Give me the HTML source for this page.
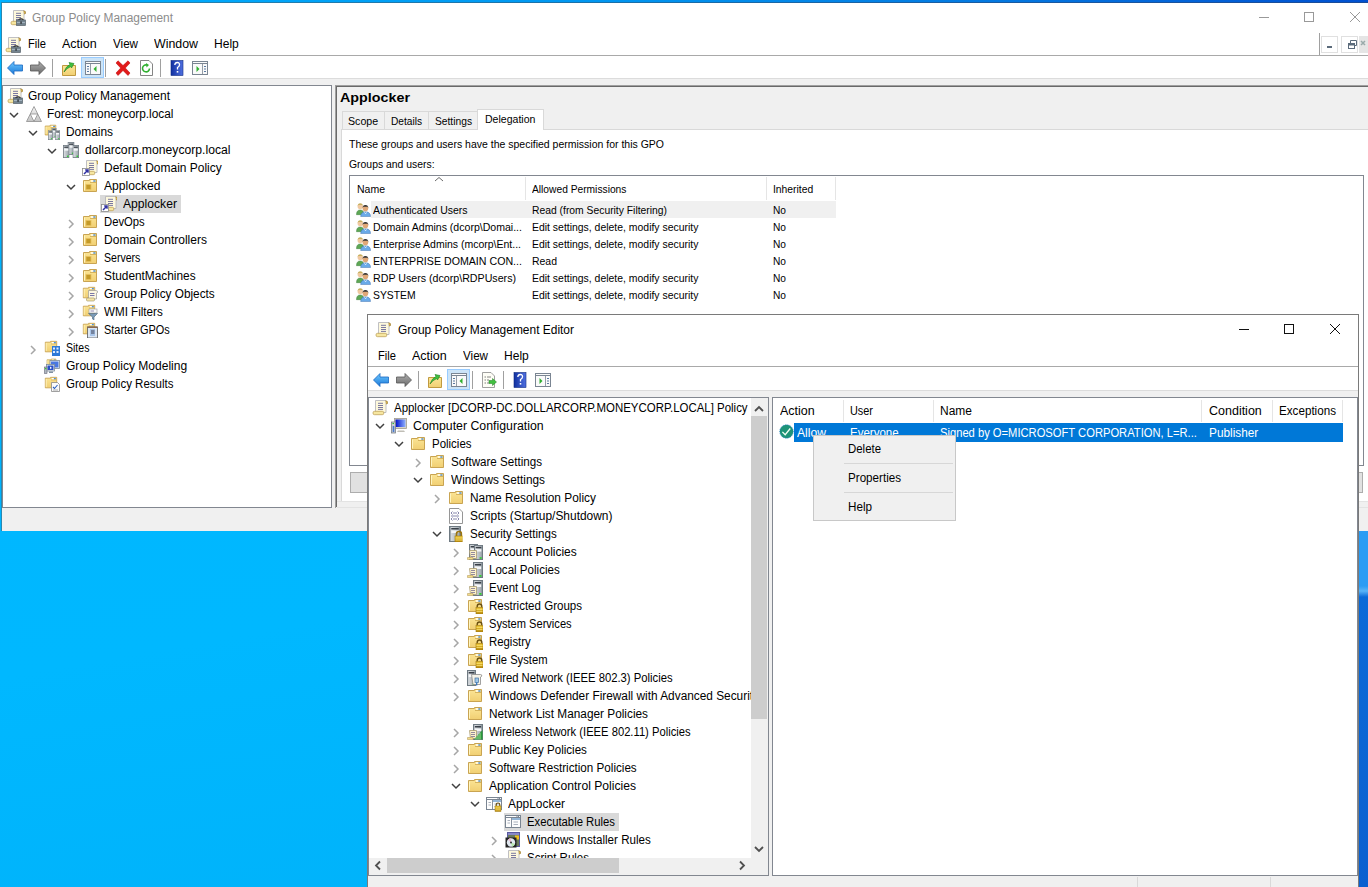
<!DOCTYPE html>
<html><head><meta charset="utf-8"><style>
html,body{margin:0;padding:0;width:1368px;height:887px;overflow:hidden;background:#00b8ff;font-family:"Liberation Sans", sans-serif;}
.a{position:absolute;}
.t{position:absolute;line-height:0;white-space:nowrap;transform-origin:0 0;}
svg.i{position:absolute;overflow:visible;}
</style></head><body>
<svg width="0" height="0" style="position:absolute"><defs>
<linearGradient id="gFold" x1="0" y1="0" x2="0" y2="1"><stop offset="0" stop-color="#fbe596"/><stop offset="1" stop-color="#f1cf72"/></linearGradient>
<linearGradient id="gGray" x1="0" y1="0" x2="1" y2="0"><stop offset="0" stop-color="#dfe3e6"/><stop offset="1" stop-color="#9aa3aa"/></linearGradient>
<linearGradient id="gLock" x1="0" y1="0" x2="0" y2="1"><stop offset="0" stop-color="#f2cc3a"/><stop offset="1" stop-color="#b88a10"/></linearGradient>
<linearGradient id="gTri" x1="0" y1="0" x2="0" y2="1"><stop offset="0" stop-color="#f4f4f4"/><stop offset="1" stop-color="#c4c4c4"/></linearGradient>
<linearGradient id="gScreen" x1="0" y1="0" x2="1" y2="0"><stop offset="0" stop-color="#0010c8"/><stop offset="1" stop-color="#8fb0ff"/></linearGradient>
<linearGradient id="gBack" x1="0" y1="0" x2="0" y2="1"><stop offset="0" stop-color="#6ec8ff"/><stop offset="1" stop-color="#1a78d8"/></linearGradient>
<linearGradient id="gFwd" x1="0" y1="0" x2="0" y2="1"><stop offset="0" stop-color="#b0b0b0"/><stop offset="1" stop-color="#6a6a6a"/></linearGradient>
<linearGradient id="gHelp" x1="0" y1="0" x2="1" y2="0"><stop offset="0" stop-color="#1030a0"/><stop offset="1" stop-color="#5070e0"/></linearGradient>

<symbol id="fold" viewBox="0 0 16 16">
 <path d="M1.5 2.5 H7.5 V1.5 H14.5 V13.5 H1.5 Z" fill="url(#gFold)" stroke="#c9a452"/>
 <path d="M8 4.5 H14" stroke="#d6b35c"/>
 <rect x="9" y="2.3" width="2.5" height="1.4" fill="#fff"/><rect x="11.3" y="2.3" width="2.2" height="1.4" fill="#4a8fe0"/>
 <path d="M2.5 3.5 V12.5" stroke="#fff5c0" stroke-width="1"/>
</symbol>
<symbol id="lock" viewBox="0 0 16 16">
 <path d="M10 10 V8 A2.5 2.5 0 0 1 15 8 V10" fill="none" stroke="#9a7410" stroke-width="1.6"/>
 <rect x="8.5" y="10" width="8" height="6" fill="url(#gLock)" stroke="#a07a10" stroke-width="0.6"/>
 <path d="M9 12 H16 M9 14 H16" stroke="#f8e070" stroke-width="0.8"/>
</symbol>
<symbol id="foldlock" viewBox="0 0 16 16">
 <use href="#fold" width="16" height="16"/>
 <path d="M10.2 9.5 V8.3 A2.3 2.3 0 0 1 14.8 8.3 V9.5" fill="none" stroke="#6a5010" stroke-width="1.4"/>
 <rect x="9" y="9.5" width="7" height="6.5" fill="url(#gLock)" stroke="#a07a10" stroke-width="0.6"/>
 <path d="M9.5 11.5 H15.5 M9.5 13.5 H15.5" stroke="#f8e070" stroke-width="0.8"/>
</symbol>
<symbol id="server" viewBox="0 0 8 16" preserveAspectRatio="none">
 <rect x="0.5" y="0.5" width="7" height="15" fill="url(#gGray)" stroke="#6f7a82"/>
 <rect x="1.5" y="2" width="5" height="1.5" fill="#3a4048"/>
 <rect x="1.5" y="4.5" width="5" height="2.5" fill="#f4f6f8"/>
 <rect x="5" y="13" width="1.8" height="1.8" fill="#30d030"/>
</symbol>
<symbol id="scroll" viewBox="0 0 16 16">
 <path d="M3.5 0.5 H14 V12.5 H3.5Z" fill="#fdf8dc" stroke="#b0b0b8" stroke-width="0.8"/>
 <path d="M13.5 0.8 Q16.2 0.8 15.5 3.5 L14 4" fill="#d4b050" stroke="#a08030" stroke-width="0.7"/>
 <path d="M6 3.3 H11 M6 5.5 H11 M6 7.5 H11 M6 9.4 H11" stroke="#7a78a0" stroke-width="1"/>
 <rect x="1" y="11.3" width="10.8" height="3.4" rx="1.5" fill="#f6e6a0" stroke="#b89a50" stroke-width="0.7"/>
</symbol>
<symbol id="gpm" viewBox="0 0 16 16">
 <use href="#scroll" width="16" height="16"/>
 <path d="M8.5 10 Q11 7.8 13.5 10" fill="none" stroke="#222" stroke-width="1.1"/>
 <rect x="6.5" y="10" width="9" height="5.5" fill="#74848f" stroke="#56616a" stroke-width="0.7"/>
 <rect x="7" y="12" width="8" height="0.9" fill="#a8b8c4"/>
 <rect x="10.5" y="11.5" width="1.1" height="2.2" fill="#111"/>
</symbol>
<symbol id="gpolink" viewBox="0 0 16 16">
 <use href="#scroll" width="16" height="16" x="1"/>
 <rect x="0.5" y="8.5" width="7" height="7" fill="#fff" stroke="#8a8a8a" stroke-width="0.8"/>
 <path d="M2 14 L6 10 M3.2 10 H6 V12.8" fill="none" stroke="#3030a0" stroke-width="1.5"/>
</symbol>
<symbol id="forest" viewBox="0 0 16 16">
 <path d="M8 0.5 L15.5 15.5 H0.5 Z" fill="url(#gTri)" stroke="#8e8e8e" stroke-width="0.8"/>
 <path d="M4.25 8 H11.75 L8 15.5 Z" fill="#fff" stroke="#8e8e8e" stroke-width="0.8"/>
</symbol>
<symbol id="domain" viewBox="0 0 16 16">
 <use href="#server" x="4.5" y="0" width="7" height="13"/>
 <use href="#server" x="0" y="3" width="6.5" height="13"/>
 <use href="#server" x="9.5" y="3" width="6.5" height="13"/>
</symbol>
<symbol id="domains" viewBox="0 0 16 16">
 <use href="#fold" width="13" height="13"/>
 <use href="#domain" x="4" y="4" width="12" height="12"/>
</symbol>
<symbol id="ou" viewBox="0 0 16 16">
 <use href="#fold" width="16" height="16"/>
 <rect x="4" y="6.5" width="5" height="5" fill="#c49a28" stroke="#e6c060" stroke-width="0.8"/>
</symbol>
<symbol id="gpofold" viewBox="0 0 16 16">
 <use href="#fold" width="14" height="14"/>
 <path d="M6.5 4.5 H14 Q16 4.5 15.5 6.5 L14.5 7 V13 H6.5Z" fill="#fdf7e0" stroke="#9a9a9a" stroke-width="0.7"/>
 <path d="M8 7.5 H12.5 M8 9.5 H12.5" stroke="#7a78a8" stroke-width="1"/>
 <rect x="4.5" y="12" width="8" height="3" rx="1" fill="#f4e4a8" stroke="#a09060" stroke-width="0.6"/>
</symbol>
<symbol id="wmi" viewBox="0 0 16 16">
 <use href="#fold" width="14" height="14"/>
 <rect x="7" y="5" width="8" height="4" fill="#fafafa" stroke="#999" stroke-width="0.6"/>
 <path d="M8.5 7 H12" stroke="#8a80b0" stroke-width="0.9"/>
 <path d="M6.5 9.5 H15.5 L12 13 V16 L10.5 15 V13 Z" fill="#7a9ab8" stroke="#4a6680" stroke-width="0.6"/>
</symbol>
<symbol id="starter" viewBox="0 0 16 16">
 <use href="#fold" width="14" height="14"/>
 <rect x="5.5" y="5" width="10" height="11" fill="#dbe6f4" stroke="#5a5a5a" stroke-width="0.8"/>
 <rect x="5.5" y="4.5" width="10" height="1.5" fill="#8a6a50"/>
 <rect x="8" y="7" width="5" height="7" fill="#a8c4e8"/>
 <path d="M9 9 H12.5 M9 11 H12.5" stroke="#334" stroke-width="0.9"/>
</symbol>
<symbol id="sites" viewBox="0 0 16 16">
 <use href="#fold" width="14" height="14"/>
 <rect x="8" y="6" width="8" height="10" fill="#2e7ad8"/>
 <path d="M9 7.5 H11 V9.5 H9Z M12.5 7.5 H14.5 V9.5 H12.5Z M9 11 H11 V13 H9Z M12.5 11 H14.5 V13 H12.5Z" fill="#dbe9ff"/>
</symbol>
<symbol id="modeling" viewBox="0 0 16 16">
 <use href="#fold" width="11" height="11" x="2"/>
 <rect x="6" y="2.5" width="9.5" height="8" fill="#eef2f6" stroke="#7a8a9a" stroke-width="0.8"/>
 <rect x="7" y="3.5" width="7.5" height="6" fill="#4a78e0"/>
 <rect x="2.5" y="6.5" width="8" height="6.5" fill="#eef2f6" stroke="#7a8a9a" stroke-width="0.8"/>
 <rect x="3.5" y="7.5" width="6" height="4.5" fill="#2a50c8"/><path d="M6 8.5 L6 11 L8 10Z" fill="#fff"/>
 <rect x="0.5" y="9" width="2.5" height="6.5" fill="#b0b8c0" stroke="#667" stroke-width="0.6"/>
 <rect x="1" y="10" width="1.4" height="1.2" fill="#30d030"/>
 <rect x="5" y="13.5" width="4" height="1.5" fill="#8090a0"/>
</symbol>
<symbol id="results" viewBox="0 0 16 16">
 <use href="#fold" width="14" height="14"/>
 <path d="M7.5 6.5 H13.5 L15.5 8.5 V15.5 H7.5Z" fill="#fafafa" stroke="#888" stroke-width="0.8"/>
 <path d="M9 11 L10.5 12.5 L13.5 9" fill="none" stroke="#2a60c0" stroke-width="1.1"/>
 <path d="M9 14 H14" stroke="#999" stroke-width="0.8"/>
</symbol>
<symbol id="escroll" viewBox="0 0 16 16"><use href="#scroll" width="16" height="16"/></symbol>
<symbol id="comp" viewBox="0 0 16 16">
 <rect x="3.5" y="0.5" width="12" height="10" fill="#d8d4c8" stroke="#a09c90" stroke-width="0.8"/>
 <rect x="4.5" y="1.5" width="10" height="7.5" fill="url(#gScreen)"/>
 <path d="M7 12.5 H13 L14 14 H6Z" fill="#c0beb6"/>
 <rect x="0.5" y="4" width="4" height="11" fill="#c8cdd2" stroke="#7a8088" stroke-width="0.8"/>
 <rect x="1.7" y="8" width="1.6" height="6" fill="#4a7ad0"/>
 <rect x="1.5" y="5" width="1.5" height="1" fill="#30c030"/>
</symbol>
<symbol id="scripts" viewBox="0 0 16 16">
 <path d="M1.5 0.5 H11 L14.5 4 V15.5 H1.5Z" fill="#fff" stroke="#8a8a8a" stroke-width="0.9"/>
 <path d="M4.5 3.5 L3 5 L4.5 6.5 M9.5 3.5 L11 5 L9.5 6.5 M5 5 H9 M4.5 9.5 L3 11 L4.5 12.5 M9.5 9.5 L11 11 L9.5 12.5 M5 11 H9 M3 8 H11" fill="none" stroke="#6a6a9a" stroke-width="0.8"/>
</symbol>
<symbol id="secset" viewBox="0 0 16 16">
 <use href="#server" x="1" y="0" width="12" height="16"/>
 <use href="#lock" x="-1.5" y="0" width="16" height="16"/>
</symbol>
<symbol id="srvscroll" viewBox="0 0 16 16">
 <use href="#server" x="6" y="0" width="10" height="16"/>
 <path d="M2.5 6.5 H9.5 V14.5 H3.5 Z" fill="#fdf2cc" stroke="#a89a70" stroke-width="0.8"/>
 <path d="M4 8.5 H8 M4 10.5 H8 M4 12.5 H8" stroke="#7a7090" stroke-width="0.8"/>
 <path d="M0.5 13.5 H6 V15.5 H0.5Z" fill="#f2dc8c" stroke="#b8a060" stroke-width="0.6"/>
</symbol>
<symbol id="acctpol" viewBox="0 0 16 16">
 <use href="#server" x="2" y="0" width="9" height="16"/>
 <use href="#server" x="7" y="1" width="9" height="15"/>
 <path d="M2.5 6.5 H9.5 V14.5 H3.5 Z" fill="#fdf2cc" stroke="#a89a70" stroke-width="0.8"/>
 <path d="M4 8.5 H8 M4 10.5 H8 M4 12.5 H8" stroke="#7a7090" stroke-width="0.8"/>
 <path d="M0.5 13.5 H6 V15.5 H0.5Z" fill="#f2dc8c" stroke="#b8a060" stroke-width="0.6"/>
</symbol>
<symbol id="wired" viewBox="0 0 16 16">
 <use href="#server" x="0" y="0" width="9" height="16"/>
 <path d="M4.5 4.5 H13.5 Q15.5 4.5 14.5 6.5 L13.5 7 V14.5 H6 Z" fill="#f6f3e8" stroke="#8a8a8a" stroke-width="0.8"/>
 <rect x="8" y="8" width="3.5" height="4.5" fill="#a0c8e8" stroke="#4070a0" stroke-width="0.7"/>
 <path d="M9.7 12.5 V15.5" stroke="#2a70c0" stroke-width="1.2"/>
</symbol>
<symbol id="wireless" viewBox="0 0 16 16">
 <use href="#srvscroll" width="16" height="16"/>
 <path d="M7 15.5 L15.5 6 V15.5 Z" fill="#2a9a3a"/>
 <path d="M9 15.5 V13 M11 15.5 V11 M13 15.5 V9" stroke="#bfe8b0" stroke-width="0.8"/>
</symbol>
<symbol id="win" viewBox="0 0 16 16">
 <rect x="0.5" y="1.5" width="15" height="12" fill="#fdfdfd" stroke="#7a8592"/>
 <path d="M1 3.5 H15" stroke="#7a8592"/>
 <rect x="11.5" y="2" width="1" height="1" fill="#7a8592"/><rect x="13" y="2" width="1" height="1" fill="#7a8592"/>
 <path d="M6.5 4 V13" stroke="#7a8592" stroke-width="0.9"/>
 <path d="M7 5 H15" stroke="#2a6fb0" stroke-width="1"/>
 <path d="M2.5 6.5 H5 M2.5 9 H5 M8.5 8 H13 M8.5 10.5 H13" stroke="#a0a8b4" stroke-width="0.9"/>
</symbol>
<symbol id="applocker" viewBox="0 0 16 16">
 <use href="#win" width="16" height="16"/>
 <path d="M10.2 10 V8.8 A1.8 1.8 0 0 1 13.8 8.8 V10" fill="none" stroke="#6a5010" stroke-width="1.2"/>
 <rect x="9" y="10" width="6" height="5.5" fill="url(#gLock)" stroke="#a07a10" stroke-width="0.5"/>
 <path d="M9.5 12 H14.5 M9.5 13.8 H14.5" stroke="#f8e070" stroke-width="0.7"/>
</symbol>
<symbol id="installer" viewBox="0 0 16 16">
 <rect x="2.5" y="0.5" width="12" height="14" fill="#6a7a5a" stroke="#5a5aa0"/>
 <rect x="3" y="1" width="11" height="2" fill="#8888c8"/>
 <rect x="10" y="3.5" width="4" height="4" fill="#f0c020"/>
 <rect x="0.5" y="5.5" width="11" height="10" fill="#222"/>
 <circle cx="6" cy="10.5" r="4.2" fill="#e0e8f0"/>
 <path d="M6 10.5 L3 7.5 A4.2 4.2 0 0 1 6 6.3Z" fill="#f0b8d0"/>
 <path d="M6 10.5 L10 12 A4.2 4.2 0 0 1 7 14.6Z" fill="#b8e8b0"/>
 <circle cx="6" cy="10.5" r="1" fill="#333"/>
</symbol>
<symbol id="users" viewBox="0 0 16 16">
 <path d="M0.5 13.5 Q0.5 8.5 4.5 8.5 Q8.5 8.5 8.5 13.5Z" fill="#5ea855" stroke="#3a7a3a" stroke-width="0.5"/>
 <circle cx="4.5" cy="4.8" r="2.8" fill="#f0c8a0"/>
 <path d="M1.7 4.5 Q1.8 1.3 4.5 1.3 Q7.3 1.3 7.3 4.3 L6.5 3.2 H2.6Z" fill="#c8b060"/>
 <path d="M5 15.5 Q5 10.5 10.2 10.5 Q15.5 10.5 15.5 15.5Z" fill="#6aaae8" stroke="#3a70b0" stroke-width="0.5"/>
 <circle cx="10" cy="6.8" r="3" fill="#e0a878"/>
 <path d="M7 6.5 Q7 3.3 10 3.3 Q13 3.3 13.2 6.8 L12.5 5 H7.8Z" fill="#333"/>
 <path d="M9 11 L10.2 12.5 L11.4 11" fill="none" stroke="#fff" stroke-width="0.8"/>
</symbol>
<symbol id="allow" viewBox="0 0 16 16">
 <circle cx="8" cy="8" r="7.2" fill="#1e9478"/>
 <circle cx="8" cy="8" r="7.2" fill="none" stroke="#1a78c8" stroke-width="0.8" stroke-dasharray="1 1"/>
 <path d="M3.6 8.4 L6.6 11.4 L12 4.8" fill="none" stroke="#f4fff4" stroke-width="1.4"/>
</symbol>
<symbol id="chevD" viewBox="0 0 16 16">
 <path d="M4 6 L8 10 L12 6" fill="none" stroke="#404040" stroke-width="1.5"/>
</symbol>
<symbol id="chevR" viewBox="0 0 16 16">
 <path d="M6 4 L10 8 L6 12" fill="none" stroke="#a6a6a6" stroke-width="1.5"/>
</symbol>
<!-- toolbar -->
<symbol id="tbBack" viewBox="0 0 16 16">
 <path d="M0.5 8 L7 1.5 V5 H15.5 V11 H7 V14.5Z" fill="url(#gBack)" stroke="#1a68c0" stroke-width="0.8"/>
</symbol>
<symbol id="tbFwd" viewBox="0 0 16 16">
 <path d="M15.5 8 L9 1.5 V5 H0.5 V11 H9 V14.5Z" fill="url(#gFwd)" stroke="#555" stroke-width="0.8"/>
</symbol>
<symbol id="tbUp" viewBox="0 0 16 16">
 <path d="M1.5 5.5 H14.5 V15.5 H1.5Z" fill="url(#gFold)" stroke="#c09a40"/>
 <path d="M3 12 Q5 6 9 4.5 L8 2.5 L13 3.5 L10.5 8 L9.8 6.5 Q6 8 3 12Z" fill="#40c040" stroke="#208020" stroke-width="0.6"/>
</symbol>
<symbol id="tbTree" viewBox="0 0 16 16">
 <rect x="0.5" y="1.5" width="15" height="13" fill="#fafafa" stroke="#7a8592"/>
 <path d="M1 3.5 H15" stroke="#7a8592"/>
 <path d="M5.5 4 V14" stroke="#7a8592" stroke-width="0.8"/>
 <path d="M2 6.5 H4 M2 9 H4 M2 11.5 H4" stroke="#5a7aa0" stroke-width="1"/>
 <path d="M11.5 6 L8.5 9 L11.5 12Z" fill="#30b030"/>
</symbol>
<symbol id="tbDel" viewBox="0 0 16 16">
 <path d="M1 3 L3 0.8 L8 5.5 L13 0.8 L15 3 L10.3 8 L15 13 L13 15.5 L8 10.5 L3 15.5 L1 13 L5.7 8Z" fill="#e21a1a" stroke="#b00" stroke-width="0.5"/>
</symbol>
<symbol id="tbRef" viewBox="0 0 16 16">
 <path d="M1.5 0.5 H10 L13.5 4 V15.5 H1.5Z" fill="#fff" stroke="#777" stroke-width="0.9"/>
 <path d="M10.5 8.5 A3.5 3.5 0 1 1 8 5" fill="none" stroke="#30b030" stroke-width="1.6"/>
 <path d="M7 3 L10 5 L7.5 7.5Z" fill="#30b030"/>
</symbol>
<symbol id="tbHelp" viewBox="0 0 16 16">
 <rect x="2" y="0.5" width="12" height="15" fill="url(#gHelp)" stroke="#102a80" stroke-width="0.6"/>
 <path d="M5.8 5 Q6 2.5 8.3 2.5 Q10.7 2.5 10.5 5 Q10.3 6.5 8.5 7.5 V9.5" fill="none" stroke="#fff" stroke-width="1.3"/>
 <rect x="7.7" y="11" width="1.6" height="1.6" fill="#fff"/>
</symbol>
<symbol id="tbAct" viewBox="0 0 16 16">
 <rect x="0.5" y="1.5" width="15" height="13" fill="#fafafa" stroke="#7a8592"/>
 <path d="M1 3.5 H15" stroke="#7a8592"/>
 <path d="M10.5 4 V14" stroke="#7a8592" stroke-width="0.8"/>
 <path d="M12 6.5 H14 M12 9 H14 M12 11.5 H14" stroke="#5a7aa0" stroke-width="1"/>
 <path d="M4.5 6 L7.5 9 L4.5 12Z" fill="#30b030"/>
</symbol>
<symbol id="tbExport" viewBox="0 0 16 16">
 <path d="M1.5 0.5 H10 L13.5 4 V15.5 H1.5Z" fill="#fdfdf6" stroke="#888" stroke-width="0.8"/>
 <path d="M3.5 5 H5 M3.5 8 H5 M3.5 11 H5 M6 5 H10 M6 8 H8 M6 11 H8" stroke="#666" stroke-width="0.8"/>
 <path d="M8 8.5 H11.5 V6.5 L15.5 10 L11.5 13.5 V11.5 H8Z" fill="#40c040" stroke="#208020" stroke-width="0.5"/>
</symbol>
</defs>
</svg>
<div class="a" style="left:0px;top:0px;width:1368px;height:887px;background:linear-gradient(170deg,#00b4ff 0%,#00b8ff 60%,#00b0f8 100%);"></div><div class="a" style="left:1359px;top:531px;width:9px;height:356px;background:linear-gradient(180deg,#2a9cf4 0px,#2a9cf4 55px,#58b4f8 60px,#0a6ad8 66px,#0a60d0 100%);"></div><div class="a" style="left:2px;top:3px;width:1366px;height:528px;background:#ffffff;"></div><div class="a" style="left:0px;top:0px;width:1368px;height:2px;background:linear-gradient(90deg,#00b0ff 0px,#0096f0 600px,#0478e0 1000px,#0050d0 1368px);"></div><div class="a" style="left:0px;top:0px;width:1px;height:531px;background:#00b4ff;"></div><div class="a" style="left:1px;top:2px;width:1367px;height:1px;background:linear-gradient(90deg,#2a88b0 0px,#1a70a8 600px,#1a5aa0 1000px,#1a4a98 1368px);"></div><div class="a" style="left:1px;top:2px;width:1px;height:529px;background:#2a88b0;"></div><svg class="i" style="left:1250px;top:8px" width="118" height="20"><g stroke="#999" stroke-width="1" fill="none"><line x1="9" y1="9.5" x2="19" y2="9.5"/><rect x="54.5" y="4.5" width="9" height="9"/><line x1="100" y1="4" x2="110" y2="14"/><line x1="110" y1="4" x2="100" y2="14"/></g></svg><div class="a" style="left:2px;top:55px;width:1366px;height:1px;background:#a9a9a9;"></div><div class="a" style="left:1319px;top:33px;width:1px;height:22px;background:#a0a0a0;"></div><div class="a" style="left:1321px;top:36px;width:17px;height:17px;background:#fff;box-sizing:border-box;border:1px solid #e0e0e0;"></div><div class="a" style="left:1341px;top:36px;width:17px;height:17px;background:#fff;box-sizing:border-box;border:1px solid #e0e0e0;"></div><div class="a" style="left:1359px;top:36px;width:9px;height:17px;background:#e5e5e5;"></div><svg class="i" style="left:1321px;top:36px" width="47" height="17"><g fill="#5a6a7a"><rect x="6" y="10" width="5" height="2"/></g><g stroke="#5a6a7a" fill="none" stroke-width="1"><rect x="27.5" y="7.5" width="6" height="5"/><path d="M29.5 7.5 V4.5 H35.5 V9.5 H33.5"/><rect x="27.5" y="7.5" width="6" height="1.5" fill="#5a6a7a"/></g><path d="M40 5 L44 9 M44 5 L40 9" stroke="#9aa" stroke-width="1.5"/></svg><div class="a" style="left:2px;top:78px;width:1366px;height:1px;background:#dcdcdc;"></div><div class="a" style="left:2px;top:79px;width:1366px;height:6px;background:#f0f0f0;"></div><div class="a" style="left:2px;top:85px;width:330px;height:423px;background:#fff;box-sizing:border-box;border:1px solid #828790;"></div><div class="a" style="left:332px;top:85px;width:3px;height:423px;background:#f0f0f0;"></div><div class="a" style="left:335px;top:85px;width:1033px;height:423px;background:#f0f0f0;box-sizing:border-box;border-left:1px solid #a0a0a0;border-top:1px solid #a0a0a0;"></div><div class="a" style="left:336px;top:86px;width:1032px;height:1px;background:#696969;"></div><div class="a" style="left:336px;top:86px;width:1px;height:421px;background:#696969;"></div><div class="a" style="left:2px;top:508px;width:1366px;height:23px;background:#f0f0f0;"></div><div class="a" style="left:341px;top:129px;width:1027px;height:373px;background:#fff;box-sizing:border-box;border-left:1px solid #d9d9d9;border-top:1px solid #d9d9d9;border-bottom:1px solid #d9d9d9;"></div><div class="a" style="left:342px;top:111px;width:43px;height:19px;background:#f0f0f0;box-sizing:border-box;border:1px solid #d9d9d9;"></div><div class="a" style="left:384px;top:111px;width:45px;height:19px;background:#f0f0f0;box-sizing:border-box;border:1px solid #d9d9d9;"></div><div class="a" style="left:428px;top:111px;width:50px;height:19px;background:#f0f0f0;box-sizing:border-box;border:1px solid #d9d9d9;"></div><div class="a" style="left:477px;top:109px;width:67px;height:21px;background:#fff;box-sizing:border-box;border:1px solid #d9d9d9;border-bottom:none;"></div><div class="a" style="left:349px;top:175px;width:1015px;height:291px;background:#fff;box-sizing:border-box;border:1px solid #828790;"></div><div class="a" style="left:525px;top:177px;width:1px;height:23px;background:#e5e5e5;"></div><div class="a" style="left:766px;top:177px;width:1px;height:23px;background:#e5e5e5;"></div><div class="a" style="left:835px;top:177px;width:1px;height:23px;background:#e5e5e5;"></div><div class="a" style="left:371px;top:201px;width:465px;height:17px;background:#f0f0f0;"></div><div class="a" style="left:350px;top:472px;width:100px;height:21px;background:#e1e1e1;box-sizing:border-box;border:1px solid #adadad;"></div><div class="a" style="left:1290px;top:472px;width:73px;height:21px;background:#e1e1e1;box-sizing:border-box;border:1px solid #adadad;"></div><div class="a" style="left:337px;top:501px;width:1031px;height:1px;background:#e3e3e3;"></div><div class="a" style="left:337px;top:507px;width:1031px;height:1px;background:#e3e3e3;"></div><svg class="i" style="left:433px;top:175px" width="12" height="8"><path d="M2 6 L6 2.5 L10 6" fill="none" stroke="#6a6a6a" stroke-width="1"/></svg><div class="a" style="left:367px;top:314px;width:992px;height:573px;background:#fff;box-sizing:border-box;border:1px solid #7a7a7a;"></div><svg class="i" style="left:1230px;top:318px" width="120" height="22"><g stroke="#111" stroke-width="1" fill="none"><line x1="9" y1="11.5" x2="19" y2="11.5"/><rect x="54.5" y="6.5" width="9" height="9"/><line x1="100" y1="6" x2="110" y2="16"/><line x1="110" y1="6" x2="100" y2="16"/></g></svg><div class="a" style="left:368px;top:366px;width:990px;height:1px;background:#a9a9a9;"></div><div class="a" style="left:368px;top:390px;width:990px;height:1px;background:#dcdcdc;"></div><div class="a" style="left:368px;top:391px;width:990px;height:6px;background:#f0f0f0;"></div><div class="a" style="left:368px;top:397px;width:401px;height:479px;background:#fff;box-sizing:border-box;border:1px solid #828790;"></div><div class="a" style="left:769px;top:397px;width:3px;height:479px;background:#f0f0f0;"></div><div class="a" style="left:772px;top:397px;width:586px;height:479px;background:#fff;box-sizing:border-box;border:1px solid #828790;"></div><div class="a" style="left:368px;top:876px;width:990px;height:11px;background:#f0f0f0;"></div><div class="a" style="left:1137px;top:877px;width:1px;height:10px;background:#d9d9d9;"></div><div class="a" style="left:1270px;top:877px;width:1px;height:10px;background:#d9d9d9;"></div><div class="a" style="left:751px;top:398px;width:17px;height:460px;background:#f0f0f0;"></div><div class="a" style="left:751px;top:416px;width:16px;height:303px;background:#cdcdcd;"></div><div class="a" style="left:369px;top:858px;width:382px;height:17px;background:#f0f0f0;"></div><div class="a" style="left:387px;top:858px;width:232px;height:15px;background:#cdcdcd;"></div><div class="a" style="left:751px;top:858px;width:17px;height:17px;background:#f0f0f0;"></div><svg class="i" style="left:369px;top:398px" width="399" height="477"><g stroke="#606060" stroke-width="1.6" fill="none"><path d="M386 24 L390 20 L394 24"/><path d="M386 449 L390 453 L394 449"/><path d="M11 462 L7 466 L11 470"/><path d="M371 462 L375 466 L371 470"/></g></svg><div class="a" style="left:504px;top:813px;width:115px;height:18px;background:#d9d9d9;"></div><div class="a" style="left:843px;top:400px;width:1px;height:22px;background:#e5e5e5;"></div><div class="a" style="left:933px;top:400px;width:1px;height:22px;background:#e5e5e5;"></div><div class="a" style="left:1201px;top:400px;width:1px;height:22px;background:#e5e5e5;"></div><div class="a" style="left:1272px;top:400px;width:1px;height:22px;background:#e5e5e5;"></div><div class="a" style="left:1342px;top:400px;width:1px;height:22px;background:#e5e5e5;"></div><div class="a" style="left:794px;top:423px;width:549px;height:19px;background:#0078d7;"></div><div class="a" style="left:100px;top:195px;width:81px;height:18px;background:#d9d9d9;"></div><div class="t" style="left:31.6px;top:18.0px;font-size:12px;color:#8c8c8c;transform:scaleX(0.9924);">Group Policy Management</div><div class="t" style="left:28px;top:43.8px;font-size:12px;color:#000;transform:scaleX(0.9305);">File</div><div class="t" style="left:62px;top:43.8px;font-size:12px;color:#000;transform:scaleX(1.0432);">Action</div><div class="t" style="left:113px;top:43.8px;font-size:12px;color:#000;transform:scaleX(0.9691);">View</div><div class="t" style="left:154px;top:43.8px;font-size:12px;color:#000;transform:scaleX(1.0307);">Window</div><div class="t" style="left:214px;top:43.8px;font-size:12px;color:#000;transform:scaleX(1.0046);">Help</div><div class="t" style="left:28px;top:95.6px;font-size:12px;color:#000;transform:scaleX(0.9995);">Group Policy Management</div><div class="t" style="left:47px;top:113.6px;font-size:12px;color:#000;transform:scaleX(0.9878);">Forest: moneycorp.local</div><div class="t" style="left:66px;top:131.6px;font-size:12px;color:#000;transform:scaleX(0.9924);">Domains</div><div class="t" style="left:85px;top:149.6px;font-size:12px;color:#000;transform:scaleX(1.0146);">dollarcorp.moneycorp.local</div><div class="t" style="left:104px;top:167.6px;font-size:12px;color:#000;transform:scaleX(0.9969);">Default Domain Policy</div><div class="t" style="left:104px;top:185.6px;font-size:12px;color:#000;transform:scaleX(1.0081);">Applocked</div><div class="t" style="left:123px;top:203.6px;font-size:12px;color:#000;transform:scaleX(1.0117);">Applocker</div><div class="t" style="left:104px;top:221.6px;font-size:12px;color:#000;transform:scaleX(0.9387);">DevOps</div><div class="t" style="left:104px;top:239.6px;font-size:12px;color:#000;transform:scaleX(1.0029);">Domain Controllers</div><div class="t" style="left:104px;top:257.6px;font-size:12px;color:#000;transform:scaleX(0.8804);">Servers</div><div class="t" style="left:104px;top:275.6px;font-size:12px;color:#000;transform:scaleX(0.9878);">StudentMachines</div><div class="t" style="left:104px;top:293.6px;font-size:12px;color:#000;transform:scaleX(0.9821);">Group Policy Objects</div><div class="t" style="left:104px;top:311.6px;font-size:12px;color:#000;transform:scaleX(0.9677);">WMI Filters</div><div class="t" style="left:104px;top:329.6px;font-size:12px;color:#000;transform:scaleX(0.9121);">Starter GPOs</div><div class="t" style="left:66px;top:347.6px;font-size:12px;color:#000;transform:scaleX(0.8768);">Sites</div><div class="t" style="left:66px;top:365.6px;font-size:12px;color:#000;transform:scaleX(1.0039);">Group Policy Modeling</div><div class="t" style="left:66px;top:383.6px;font-size:12px;color:#000;transform:scaleX(0.9594);">Group Policy Results</div><div class="t" style="left:340.3px;top:98.3px;font-size:12.5px;color:#000;transform:scaleX(1.1449);font-weight:700;">Applocker</div><div class="t" style="left:348.3px;top:120.6px;font-size:11px;color:#000;transform:scaleX(0.9679);">Scope</div><div class="t" style="left:391.3px;top:120.6px;font-size:11px;color:#000;transform:scaleX(0.9219);">Details</div><div class="t" style="left:435.2px;top:120.6px;font-size:11px;color:#000;transform:scaleX(0.9308);">Settings</div><div class="t" style="left:485px;top:118.9px;font-size:11px;color:#000;transform:scaleX(0.9583);">Delegation</div><div class="t" style="left:349px;top:143.5px;font-size:11px;color:#000;transform:scaleX(0.9540);">These groups and users have the specified permission for this GPO</div><div class="t" style="left:348.8px;top:163.6px;font-size:11px;color:#000;transform:scaleX(0.9459);">Groups and users:</div><div class="t" style="left:357.3px;top:188.9px;font-size:11px;color:#000;transform:scaleX(0.9542);">Name</div><div class="t" style="left:532px;top:188.9px;font-size:11px;color:#000;transform:scaleX(0.9302);">Allowed Permissions</div><div class="t" style="left:773px;top:188.9px;font-size:11px;color:#000;transform:scaleX(0.9390);">Inherited</div><div class="t" style="left:373.4px;top:210.1px;font-size:11px;color:#000;transform:scaleX(0.9550);">Authenticated Users</div><div class="t" style="left:532px;top:210.1px;font-size:11px;color:#000;transform:scaleX(0.9397);">Read (from Security Filtering)</div><div class="t" style="left:773px;top:210.1px;font-size:11px;color:#000;transform:scaleX(0.9244);">No</div><div class="t" style="left:373.4px;top:227.1px;font-size:11px;color:#000;transform:scaleX(0.9595);">Domain Admins (dcorp\Domai...</div><div class="t" style="left:532px;top:227.1px;font-size:11px;color:#000;transform:scaleX(0.9483);">Edit settings, delete, modify security</div><div class="t" style="left:773px;top:227.1px;font-size:11px;color:#000;transform:scaleX(0.9244);">No</div><div class="t" style="left:373.4px;top:244.1px;font-size:11px;color:#000;transform:scaleX(0.9531);">Enterprise Admins (mcorp\Ent...</div><div class="t" style="left:532px;top:244.1px;font-size:11px;color:#000;transform:scaleX(0.9483);">Edit settings, delete, modify security</div><div class="t" style="left:773px;top:244.1px;font-size:11px;color:#000;transform:scaleX(0.9244);">No</div><div class="t" style="left:373.4px;top:261.1px;font-size:11px;color:#000;transform:scaleX(0.9673);">ENTERPRISE DOMAIN CON...</div><div class="t" style="left:532px;top:261.1px;font-size:11px;color:#000;transform:scaleX(0.9507);">Read</div><div class="t" style="left:773px;top:261.1px;font-size:11px;color:#000;transform:scaleX(0.9244);">No</div><div class="t" style="left:373.4px;top:278.1px;font-size:11px;color:#000;transform:scaleX(0.9681);">RDP Users (dcorp\RDPUsers)</div><div class="t" style="left:532px;top:278.1px;font-size:11px;color:#000;transform:scaleX(0.9483);">Edit settings, delete, modify security</div><div class="t" style="left:773px;top:278.1px;font-size:11px;color:#000;transform:scaleX(0.9244);">No</div><div class="t" style="left:373.4px;top:295.1px;font-size:11px;color:#000;transform:scaleX(0.9418);">SYSTEM</div><div class="t" style="left:532px;top:295.1px;font-size:11px;color:#000;transform:scaleX(0.9483);">Edit settings, delete, modify security</div><div class="t" style="left:773px;top:295.1px;font-size:11px;color:#000;transform:scaleX(0.9244);">No</div><div class="t" style="left:397.6px;top:329.8px;font-size:12px;color:#000;transform:scaleX(0.9957);">Group Policy Management Editor</div><div class="t" style="left:378.3px;top:355.8px;font-size:12px;color:#000;transform:scaleX(0.9305);">File</div><div class="t" style="left:412.4px;top:355.8px;font-size:12px;color:#000;transform:scaleX(1.0432);">Action</div><div class="t" style="left:463px;top:355.8px;font-size:12px;color:#000;transform:scaleX(0.9691);">View</div><div class="t" style="left:504.4px;top:355.8px;font-size:12px;color:#000;transform:scaleX(1.0046);">Help</div><div class="t" style="left:394px;top:407.7px;font-size:12px;color:#000;transform:scaleX(0.9531);">Applocker [DCORP-DC.DOLLARCORP.MONEYCORP.LOCAL] Policy</div><div class="t" style="left:413px;top:425.7px;font-size:12px;color:#000;transform:scaleX(1.0259);">Computer Configuration</div><div class="t" style="left:432px;top:443.7px;font-size:12px;color:#000;transform:scaleX(0.9550);">Policies</div><div class="t" style="left:451px;top:461.7px;font-size:12px;color:#000;transform:scaleX(0.9674);">Software Settings</div><div class="t" style="left:451px;top:479.7px;font-size:12px;color:#000;transform:scaleX(0.9856);">Windows Settings</div><div class="t" style="left:470px;top:497.7px;font-size:12px;color:#000;transform:scaleX(0.9883);">Name Resolution Policy</div><div class="t" style="left:470px;top:515.7px;font-size:12px;color:#000;transform:scaleX(0.9930);">Scripts (Startup/Shutdown)</div><div class="t" style="left:470px;top:533.7px;font-size:12px;color:#000;transform:scaleX(0.9628);">Security Settings</div><div class="t" style="left:489px;top:551.7px;font-size:12px;color:#000;transform:scaleX(0.9961);">Account Policies</div><div class="t" style="left:489px;top:569.7px;font-size:12px;color:#000;transform:scaleX(0.9635);">Local Policies</div><div class="t" style="left:489px;top:587.7px;font-size:12px;color:#000;transform:scaleX(0.9529);">Event Log</div><div class="t" style="left:489px;top:605.7px;font-size:12px;color:#000;transform:scaleX(0.9617);">Restricted Groups</div><div class="t" style="left:489px;top:623.7px;font-size:12px;color:#000;transform:scaleX(0.9244);">System Services</div><div class="t" style="left:489px;top:641.7px;font-size:12px;color:#000;transform:scaleX(0.9474);">Registry</div><div class="t" style="left:489px;top:659.7px;font-size:12px;color:#000;transform:scaleX(0.9332);">File System</div><div class="t" style="left:489px;top:677.7px;font-size:12px;color:#000;transform:scaleX(0.9396);">Wired Network (IEEE 802.3) Policies</div><div class="t" style="left:489px;top:695.7px;font-size:12px;color:#000;transform:scaleX(0.9874);">Windows Defender Firewall with Advanced Security</div><div class="t" style="left:489px;top:713.7px;font-size:12px;color:#000;transform:scaleX(0.9851);">Network List Manager Policies</div><div class="t" style="left:489px;top:731.7px;font-size:12px;color:#000;transform:scaleX(0.9339);">Wireless Network (IEEE 802.11) Policies</div><div class="t" style="left:489px;top:749.7px;font-size:12px;color:#000;transform:scaleX(0.9656);">Public Key Policies</div><div class="t" style="left:489px;top:767.7px;font-size:12px;color:#000;transform:scaleX(0.9713);">Software Restriction Policies</div><div class="t" style="left:489px;top:785.7px;font-size:12px;color:#000;transform:scaleX(1.0110);">Application Control Policies</div><div class="t" style="left:508px;top:803.7px;font-size:12px;color:#000;transform:scaleX(0.9935);">AppLocker</div><div class="t" style="left:527px;top:821.7px;font-size:12px;color:#000;transform:scaleX(0.9423);">Executable Rules</div><div class="t" style="left:527px;top:839.7px;font-size:12px;color:#000;transform:scaleX(0.9668);">Windows Installer Rules</div><div class="t" style="left:527px;top:857.7px;font-size:12px;color:#000;transform:scaleX(0.9585);">Script Rules</div><div class="t" style="left:780.2px;top:410.8px;font-size:12px;color:#000;transform:scaleX(1.0402);">Action</div><div class="t" style="left:850.1px;top:410.8px;font-size:12px;color:#000;transform:scaleX(0.9075);">User</div><div class="t" style="left:940.4px;top:410.8px;font-size:12px;color:#000;transform:scaleX(0.9995);">Name</div><div class="t" style="left:1209.4px;top:410.8px;font-size:12px;color:#000;transform:scaleX(1.0414);">Condition</div><div class="t" style="left:1279.4px;top:410.8px;font-size:12px;color:#000;transform:scaleX(0.9710);">Exceptions</div><div class="t" style="left:796.5px;top:433.1px;font-size:12px;color:#fff;transform:scaleX(1.0109);">Allow</div><div class="t" style="left:850.1px;top:433.1px;font-size:12px;color:#fff;transform:scaleX(0.9605);">Everyone</div><div class="t" style="left:940.4px;top:433.1px;font-size:12px;color:#fff;transform:scaleX(0.9321);">Signed by O=MICROSOFT CORPORATION, L=R...</div><div class="t" style="left:1209.4px;top:433.1px;font-size:12px;color:#fff;transform:scaleX(0.9854);">Publisher</div><svg class="i" style="left:10px;top:9.5px" width="16" height="16" viewBox="0 0 16 16"><use href="#gpm"/></svg><svg class="i" style="left:4.5px;top:36.5px" width="16" height="16" viewBox="0 0 16 16"><use href="#gpm"/></svg><svg class="i" style="left:7px;top:60px" width="16" height="16" viewBox="0 0 16 16"><use href="#tbBack"/></svg><svg class="i" style="left:30px;top:60px" width="16" height="16" viewBox="0 0 16 16"><use href="#tbFwd"/></svg><div class="a" style="left:52px;top:59px;width:1px;height:18px;background:#a0a0a0;"></div><svg class="i" style="left:61px;top:60px" width="16" height="16" viewBox="0 0 16 16"><use href="#tbUp"/></svg><div class="a" style="left:81px;top:57px;width:23px;height:21px;background:#cce4f7;box-sizing:border-box;border:1px solid #99ccff;"></div><svg class="i" style="left:85px;top:60px" width="16" height="16" viewBox="0 0 16 16"><use href="#tbTree"/></svg><div class="a" style="left:105px;top:59px;width:1px;height:18px;background:#a0a0a0;"></div><svg class="i" style="left:115px;top:60px" width="16" height="16" viewBox="0 0 16 16"><use href="#tbDel"/></svg><svg class="i" style="left:139px;top:60px" width="16" height="16" viewBox="0 0 16 16"><use href="#tbRef"/></svg><div class="a" style="left:129px;top:59px;width:0px;height:0px;"></div><div class="a" style="left:160px;top:59px;width:1px;height:18px;background:#a0a0a0;"></div><svg class="i" style="left:169px;top:60px" width="16" height="16" viewBox="0 0 16 16"><use href="#tbHelp"/></svg><svg class="i" style="left:192px;top:60px" width="16" height="16" viewBox="0 0 16 16"><use href="#tbAct"/></svg><svg class="i" style="left:6.5px;top:88.19999999999999px" width="16" height="16" viewBox="0 0 16 16"><use href="#gpm"/></svg><svg class="i" style="left:26px;top:105.6px" width="16" height="16" viewBox="0 0 16 16"><use href="#forest"/></svg><svg class="i" style="left:6px;top:106.5px" width="16" height="16" viewBox="0 0 16 16"><use href="#chevD"/></svg><svg class="i" style="left:44px;top:123.6px" width="16" height="16" viewBox="0 0 16 16"><use href="#domains"/></svg><svg class="i" style="left:25px;top:124.5px" width="16" height="16" viewBox="0 0 16 16"><use href="#chevD"/></svg><svg class="i" style="left:63px;top:141.6px" width="16" height="16" viewBox="0 0 16 16"><use href="#domain"/></svg><svg class="i" style="left:44px;top:142.5px" width="16" height="16" viewBox="0 0 16 16"><use href="#chevD"/></svg><svg class="i" style="left:82px;top:159.6px" width="16" height="16" viewBox="0 0 16 16"><use href="#gpolink"/></svg><svg class="i" style="left:82px;top:177.6px" width="16" height="16" viewBox="0 0 16 16"><use href="#ou"/></svg><svg class="i" style="left:63px;top:178.5px" width="16" height="16" viewBox="0 0 16 16"><use href="#chevD"/></svg><svg class="i" style="left:101px;top:195.6px" width="16" height="16" viewBox="0 0 16 16"><use href="#gpolink"/></svg><svg class="i" style="left:82px;top:213.6px" width="16" height="16" viewBox="0 0 16 16"><use href="#ou"/></svg><svg class="i" style="left:63px;top:215.6px" width="16" height="16" viewBox="0 0 16 16"><use href="#chevR"/></svg><svg class="i" style="left:82px;top:231.6px" width="16" height="16" viewBox="0 0 16 16"><use href="#ou"/></svg><svg class="i" style="left:63px;top:233.6px" width="16" height="16" viewBox="0 0 16 16"><use href="#chevR"/></svg><svg class="i" style="left:82px;top:249.60000000000002px" width="16" height="16" viewBox="0 0 16 16"><use href="#ou"/></svg><svg class="i" style="left:63px;top:251.60000000000002px" width="16" height="16" viewBox="0 0 16 16"><use href="#chevR"/></svg><svg class="i" style="left:82px;top:267.6px" width="16" height="16" viewBox="0 0 16 16"><use href="#ou"/></svg><svg class="i" style="left:63px;top:269.6px" width="16" height="16" viewBox="0 0 16 16"><use href="#chevR"/></svg><svg class="i" style="left:82px;top:285.6px" width="16" height="16" viewBox="0 0 16 16"><use href="#gpofold"/></svg><svg class="i" style="left:63px;top:287.6px" width="16" height="16" viewBox="0 0 16 16"><use href="#chevR"/></svg><svg class="i" style="left:82px;top:303.6px" width="16" height="16" viewBox="0 0 16 16"><use href="#wmi"/></svg><svg class="i" style="left:63px;top:305.6px" width="16" height="16" viewBox="0 0 16 16"><use href="#chevR"/></svg><svg class="i" style="left:82px;top:321.6px" width="16" height="16" viewBox="0 0 16 16"><use href="#starter"/></svg><svg class="i" style="left:63px;top:323.6px" width="16" height="16" viewBox="0 0 16 16"><use href="#chevR"/></svg><svg class="i" style="left:44px;top:339.6px" width="16" height="16" viewBox="0 0 16 16"><use href="#sites"/></svg><svg class="i" style="left:25px;top:341.6px" width="16" height="16" viewBox="0 0 16 16"><use href="#chevR"/></svg><svg class="i" style="left:44px;top:357.6px" width="16" height="16" viewBox="0 0 16 16"><use href="#modeling"/></svg><svg class="i" style="left:44px;top:375.6px" width="16" height="16" viewBox="0 0 16 16"><use href="#results"/></svg><svg class="i" style="left:356px;top:201.5px" width="15" height="15" viewBox="0 0 16 16"><use href="#users"/></svg><svg class="i" style="left:356px;top:218.5px" width="15" height="15" viewBox="0 0 16 16"><use href="#users"/></svg><svg class="i" style="left:356px;top:235.5px" width="15" height="15" viewBox="0 0 16 16"><use href="#users"/></svg><svg class="i" style="left:356px;top:252.5px" width="15" height="15" viewBox="0 0 16 16"><use href="#users"/></svg><svg class="i" style="left:356px;top:269.5px" width="15" height="15" viewBox="0 0 16 16"><use href="#users"/></svg><svg class="i" style="left:356px;top:286.5px" width="15" height="15" viewBox="0 0 16 16"><use href="#users"/></svg><svg class="i" style="left:375px;top:322px" width="16" height="16" viewBox="0 0 16 16"><use href="#escroll"/></svg><svg class="i" style="left:373px;top:372px" width="16" height="16" viewBox="0 0 16 16"><use href="#tbBack"/></svg><svg class="i" style="left:396px;top:372px" width="16" height="16" viewBox="0 0 16 16"><use href="#tbFwd"/></svg><div class="a" style="left:418px;top:371px;width:1px;height:18px;background:#a0a0a0;"></div><svg class="i" style="left:427px;top:372px" width="16" height="16" viewBox="0 0 16 16"><use href="#tbUp"/></svg><div class="a" style="left:447px;top:369px;width:23px;height:21px;background:#cce4f7;box-sizing:border-box;border:1px solid #99ccff;"></div><svg class="i" style="left:451px;top:372px" width="16" height="16" viewBox="0 0 16 16"><use href="#tbTree"/></svg><div class="a" style="left:472px;top:371px;width:1px;height:18px;background:#a0a0a0;"></div><svg class="i" style="left:481px;top:372px" width="16" height="16" viewBox="0 0 16 16"><use href="#tbExport"/></svg><div class="a" style="left:503px;top:371px;width:1px;height:18px;background:#a0a0a0;"></div><svg class="i" style="left:512px;top:372px" width="16" height="16" viewBox="0 0 16 16"><use href="#tbHelp"/></svg><svg class="i" style="left:535px;top:372px" width="16" height="16" viewBox="0 0 16 16"><use href="#tbAct"/></svg><svg class="i" style="left:372px;top:399.7px" width="16" height="16" viewBox="0 0 16 16"><use href="#escroll"/></svg><svg class="i" style="left:391px;top:417.7px" width="16" height="16" viewBox="0 0 16 16"><use href="#comp"/></svg><svg class="i" style="left:372px;top:418.09999999999997px" width="16" height="16" viewBox="0 0 16 16"><use href="#chevD"/></svg><svg class="i" style="left:410px;top:435.7px" width="16" height="16" viewBox="0 0 16 16"><use href="#fold"/></svg><svg class="i" style="left:391px;top:436.09999999999997px" width="16" height="16" viewBox="0 0 16 16"><use href="#chevD"/></svg><svg class="i" style="left:429px;top:453.7px" width="16" height="16" viewBox="0 0 16 16"><use href="#fold"/></svg><svg class="i" style="left:410px;top:455.2px" width="16" height="16" viewBox="0 0 16 16"><use href="#chevR"/></svg><svg class="i" style="left:429px;top:471.7px" width="16" height="16" viewBox="0 0 16 16"><use href="#fold"/></svg><svg class="i" style="left:410px;top:472.09999999999997px" width="16" height="16" viewBox="0 0 16 16"><use href="#chevD"/></svg><svg class="i" style="left:448px;top:489.7px" width="16" height="16" viewBox="0 0 16 16"><use href="#fold"/></svg><svg class="i" style="left:429px;top:491.2px" width="16" height="16" viewBox="0 0 16 16"><use href="#chevR"/></svg><svg class="i" style="left:448px;top:507.70000000000005px" width="16" height="16" viewBox="0 0 16 16"><use href="#scripts"/></svg><svg class="i" style="left:448px;top:525.7px" width="16" height="16" viewBox="0 0 16 16"><use href="#secset"/></svg><svg class="i" style="left:429px;top:526.1px" width="16" height="16" viewBox="0 0 16 16"><use href="#chevD"/></svg><svg class="i" style="left:467px;top:543.7px" width="16" height="16" viewBox="0 0 16 16"><use href="#acctpol"/></svg><svg class="i" style="left:448px;top:545.2px" width="16" height="16" viewBox="0 0 16 16"><use href="#chevR"/></svg><svg class="i" style="left:467px;top:561.7px" width="16" height="16" viewBox="0 0 16 16"><use href="#srvscroll"/></svg><svg class="i" style="left:448px;top:563.2px" width="16" height="16" viewBox="0 0 16 16"><use href="#chevR"/></svg><svg class="i" style="left:467px;top:579.7px" width="16" height="16" viewBox="0 0 16 16"><use href="#srvscroll"/></svg><svg class="i" style="left:448px;top:581.2px" width="16" height="16" viewBox="0 0 16 16"><use href="#chevR"/></svg><svg class="i" style="left:467px;top:597.7px" width="16" height="16" viewBox="0 0 16 16"><use href="#foldlock"/></svg><svg class="i" style="left:448px;top:599.2px" width="16" height="16" viewBox="0 0 16 16"><use href="#chevR"/></svg><svg class="i" style="left:467px;top:615.7px" width="16" height="16" viewBox="0 0 16 16"><use href="#foldlock"/></svg><svg class="i" style="left:448px;top:617.2px" width="16" height="16" viewBox="0 0 16 16"><use href="#chevR"/></svg><svg class="i" style="left:467px;top:633.7px" width="16" height="16" viewBox="0 0 16 16"><use href="#foldlock"/></svg><svg class="i" style="left:448px;top:635.2px" width="16" height="16" viewBox="0 0 16 16"><use href="#chevR"/></svg><svg class="i" style="left:467px;top:651.7px" width="16" height="16" viewBox="0 0 16 16"><use href="#foldlock"/></svg><svg class="i" style="left:448px;top:653.2px" width="16" height="16" viewBox="0 0 16 16"><use href="#chevR"/></svg><svg class="i" style="left:467px;top:669.7px" width="16" height="16" viewBox="0 0 16 16"><use href="#wired"/></svg><svg class="i" style="left:448px;top:671.2px" width="16" height="16" viewBox="0 0 16 16"><use href="#chevR"/></svg><svg class="i" style="left:467px;top:687.7px" width="16" height="16" viewBox="0 0 16 16"><use href="#fold"/></svg><svg class="i" style="left:448px;top:689.2px" width="16" height="16" viewBox="0 0 16 16"><use href="#chevR"/></svg><svg class="i" style="left:467px;top:705.7px" width="16" height="16" viewBox="0 0 16 16"><use href="#fold"/></svg><svg class="i" style="left:467px;top:723.7px" width="16" height="16" viewBox="0 0 16 16"><use href="#wireless"/></svg><svg class="i" style="left:448px;top:725.2px" width="16" height="16" viewBox="0 0 16 16"><use href="#chevR"/></svg><svg class="i" style="left:467px;top:741.7px" width="16" height="16" viewBox="0 0 16 16"><use href="#fold"/></svg><svg class="i" style="left:448px;top:743.2px" width="16" height="16" viewBox="0 0 16 16"><use href="#chevR"/></svg><svg class="i" style="left:467px;top:759.7px" width="16" height="16" viewBox="0 0 16 16"><use href="#fold"/></svg><svg class="i" style="left:448px;top:761.2px" width="16" height="16" viewBox="0 0 16 16"><use href="#chevR"/></svg><svg class="i" style="left:467px;top:777.7px" width="16" height="16" viewBox="0 0 16 16"><use href="#fold"/></svg><svg class="i" style="left:448px;top:778.1px" width="16" height="16" viewBox="0 0 16 16"><use href="#chevD"/></svg><svg class="i" style="left:486px;top:795.7px" width="16" height="16" viewBox="0 0 16 16"><use href="#applocker"/></svg><svg class="i" style="left:467px;top:796.1px" width="16" height="16" viewBox="0 0 16 16"><use href="#chevD"/></svg><svg class="i" style="left:505px;top:813.7px" width="16" height="16" viewBox="0 0 16 16"><use href="#win"/></svg><svg class="i" style="left:505px;top:831.7px" width="16" height="16" viewBox="0 0 16 16"><use href="#installer"/></svg><svg class="i" style="left:486px;top:833.2px" width="16" height="16" viewBox="0 0 16 16"><use href="#chevR"/></svg><svg class="i" style="left:505px;top:849.7px" width="16" height="16" viewBox="0 0 16 16"><use href="#escroll"/></svg><svg class="i" style="left:486px;top:851.2px" width="16" height="16" viewBox="0 0 16 16"><use href="#chevR"/></svg><svg class="i" style="left:778.5px;top:424.3px" width="15" height="15" viewBox="0 0 16 16"><use href="#allow"/></svg><div class="a" style="left:751px;top:398px;width:17px;height:460px;background:#f0f0f0;"></div><div class="a" style="left:751px;top:416px;width:16px;height:303px;background:#cdcdcd;"></div><div class="a" style="left:369px;top:858px;width:382px;height:17px;background:#f0f0f0;"></div><div class="a" style="left:387px;top:858px;width:232px;height:15px;background:#cdcdcd;"></div><div class="a" style="left:751px;top:858px;width:17px;height:17px;background:#f0f0f0;"></div><div class="a" style="left:368px;top:875px;width:401px;height:1px;background:#828790;"></div><svg class="i" style="left:369px;top:398px" width="399" height="477"><g stroke="#505050" stroke-width="1.8" fill="none"><path d="M386 13 L390 9 L394 13"/><path d="M386 449 L390 453 L394 449"/><path d="M11 463.5 L7 467.5 L11 471.5"/><path d="M371 463.5 L375 467.5 L371 471.5"/></g></svg><div class="a" style="left:813px;top:435px;width:143px;height:86px;background:#f0f0f0;box-sizing:border-box;border:1px solid #c8c8c8;"></div><div class="a" style="left:844px;top:463px;width:109px;height:1px;background:#d7d7d7;"></div><div class="a" style="left:844px;top:492px;width:109px;height:1px;background:#d7d7d7;"></div><div class="t" style="left:848.2px;top:448.5px;font-size:12px;color:#000;transform:scaleX(0.9514);">Delete</div><div class="t" style="left:848.2px;top:477.7px;font-size:12px;color:#000;transform:scaleX(0.9689);">Properties</div><div class="t" style="left:848.2px;top:507.4px;font-size:12px;color:#000;transform:scaleX(0.9722);">Help</div>
</body></html>
